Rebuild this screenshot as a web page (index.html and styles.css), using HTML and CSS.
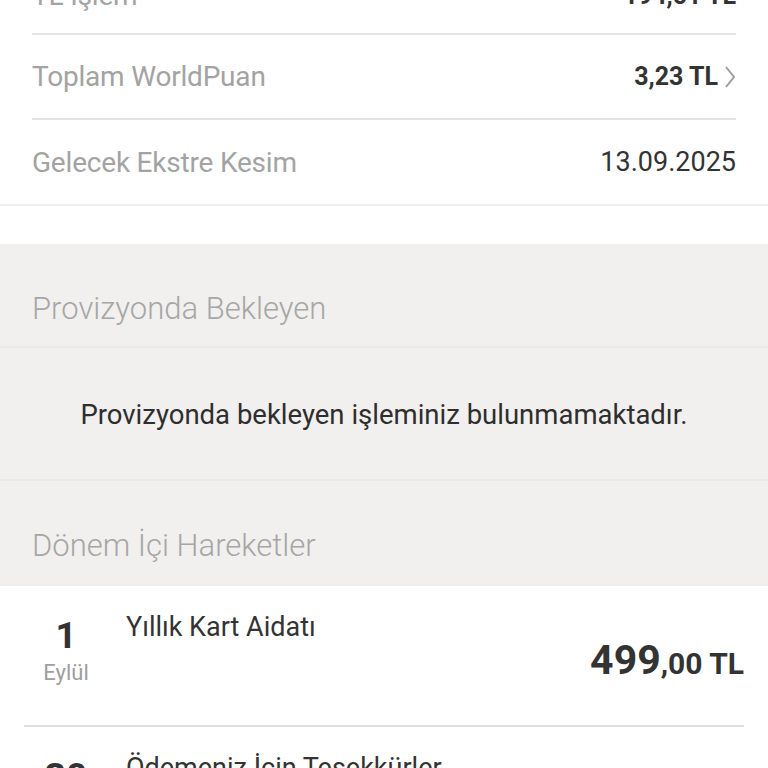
FILE: index.html
```html
<!DOCTYPE html>
<html lang="tr">
<head>
    <meta charset="UTF-8">
    <meta name="viewport" content="width=device-width, initial-scale=1.0">
    <title>Kart Hareketleri</title>
    <link rel="stylesheet" href="styles.css">
</head>
<body>
    <div class="page">

        <!-- Kart Ozeti -->
        <div class="summary">
            <div class="summary-row first">
                <span class="label">TL İşlem</span>
                <span class="value bold">194,51 TL</span>
            </div>
            <div class="summary-row">
                <span class="label">Toplam WorldPuan</span>
                <span class="value bold link">3,23 TL
                    <svg class="chevron" width="12" height="24" viewBox="0 0 12 24"><path d="M2 2 L10 12 L2 22" fill="none" stroke="#9e9e9e" stroke-width="2"/></svg>
                </span>
            </div>
            <div class="summary-row last">
                <span class="label">Gelecek Ekstre Kesim</span>
                <span class="value">13.09.2025</span>
            </div>
        </div>

        <!-- Provizyon -->
        <div class="section">
            <h3 class="section-title">Provizyonda Bekleyen</h3>
            <div class="empty">Provizyonda bekleyen işleminiz bulunmamaktadır.</div>
            <h3 class="section-title">Dönem İçi Hareketler</h3>
        </div>

        <!-- Hareketler -->
        <div class="transactions">
            <div class="tx">
                <div class="tx-date">
                    <span class="day">1</span>
                    <span class="month">Eylül</span>
                </div>
                <div class="tx-name">Yıllık Kart Aidatı</div>
                <div class="tx-amount"><span class="int">499</span>,00 TL</div>
            </div>
            <div class="tx">
                <div class="tx-date">
                    <span class="day">30</span>
                    <span class="month">Ağustos</span>
                </div>
                <div class="tx-name">Ödemeniz İçin Teşekkürler</div>
                <div class="tx-amount"><span class="int">1.250</span>,00 TL</div>
            </div>
        </div>

    </div>
</body>
</html>
```

FILE: styles.css
```css
body {
    font-family: Roboto, "Noto Sans", sans-serif;
    margin: 0;
    padding: 0;
    background-color: #fff;
    color: #333;
    overflow: hidden;
}
.page {
    width: 768px;
}
.summary {
    margin-top: -50px;
    border-bottom: 2px solid #f0f0f0;
}
.summary-row {
    display: flex;
    justify-content: space-between;
    align-items: center;
    height: 83px;
    margin: 0 32px;
    border-bottom: 2px solid #e4e4e4;
}
.summary-row.first .label,
.summary-row.first .value {
    margin-top: 8px;
}
.summary-row.last {
    border-bottom: none;
    height: 84px;
}
.label {
    font-size: 28px;
    color: #a3a3a3;
    letter-spacing: -0.2px;
}
.value {
    font-size: 27px;
    color: #333;
}
.value.bold {
    font-weight: bold;
    font-size: 25px;
}
.link {
    display: flex;
    align-items: center;
    gap: 6px;
}
.chevron {
    display: block;
}
.section {
    margin-top: 38px;
    background: #f1f0ee;
}
.section-title {
    margin: 0;
    padding: 47px 32px 19px;
    font-size: 31px;
    font-weight: 300;
    color: #a6a6a6;
    line-height: 36px;
    border-bottom: 2px solid #e9e8e6;
}
.section-title:last-child {
    border-bottom: none;
    padding-bottom: 22px;
}
.empty {
    padding: 50px 0 48px;
    line-height: 33px;
    text-align: center;
    font-size: 27.5px;
    color: #2e2e2e;
    border-bottom: 2px solid #e9e8e6;
}
.transactions {
    background: #fff;
}
.tx {
    display: flex;
    align-items: flex-start;
    height: 139px;
    margin: 0 24px;
    border-bottom: 2px solid #dedede;
}
.tx-date {
    display: flex;
    flex-direction: column;
    align-items: center;
    width: 84px;
    padding-top: 28px;
}
.day {
    font-size: 37px;
    font-weight: bold;
    line-height: 44px;
    color: #333;
}
.month {
    font-size: 22px;
    color: #9e9e9e;
    line-height: 30px;
}
.tx-name {
    flex: 1;
    padding-top: 25px;
    padding-left: 18px;
    font-size: 27px;
    color: #333;
}
.tx-amount {
    align-self: center;
    padding-top: 8px;
    font-size: 30px;
    font-weight: bold;
    color: #333;
}
.tx-amount .int {
    font-size: 41px;
}
```
